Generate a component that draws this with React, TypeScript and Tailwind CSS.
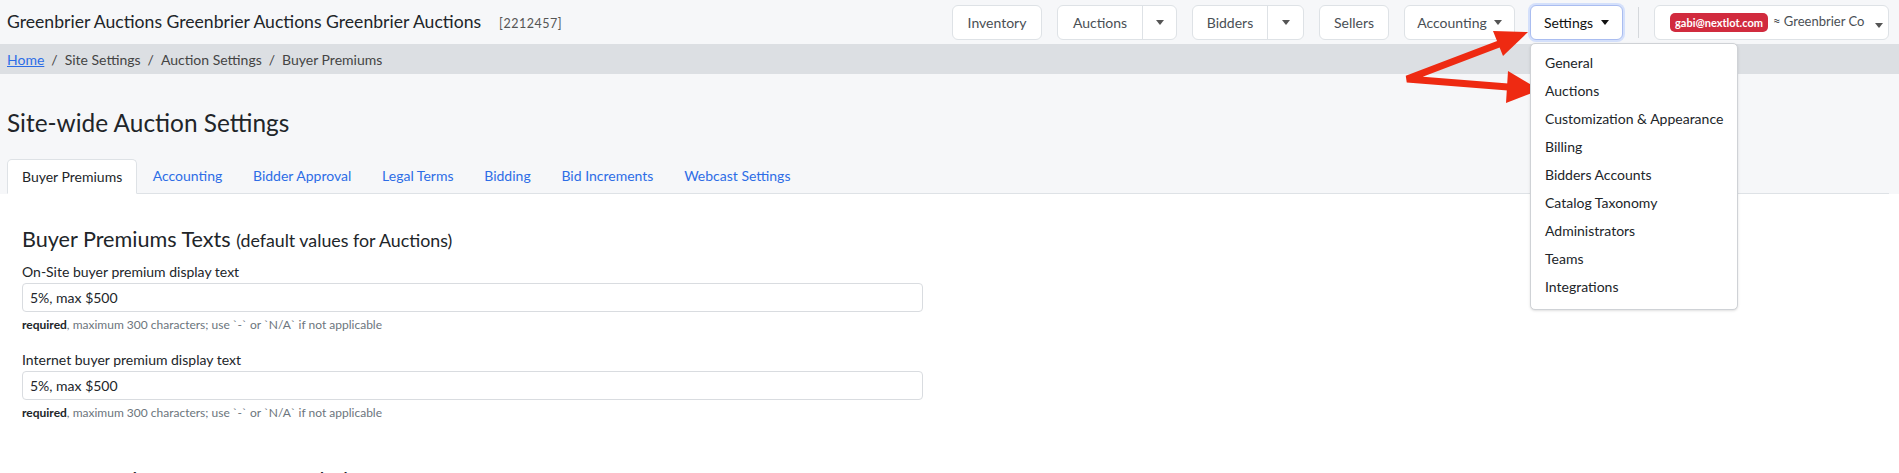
import React from "react";

const Caret = ({ color = "#555" }: { color?: string }) => (
  <span
    className="inline-block w-0 h-0 border-x-[4px] border-x-transparent border-t-[5px]"
    style={{ borderTopColor: color }}
  />
);

const navBtn =
  "h-[35px] flex items-center justify-center whitespace-nowrap bg-white border border-[#dee2e6] rounded-[6px] text-[14px] text-[#4a4f55]";

const tabs = [
  "Accounting",
  "Bidder Approval",
  "Legal Terms",
  "Bidding",
  "Bid Increments",
  "Webcast Settings",
];

const menu = [
  "General",
  "Auctions",
  "Customization & Appearance",
  "Billing",
  "Bidders Accounts",
  "Catalog Taxonomy",
  "Administrators",
  "Teams",
  "Integrations",
];

function Field({ label }: { label: string }) {
  return (
    <div className="mb-[19px]">
      <div className="text-[14px] text-[#212529] leading-[18px] mb-[2px]">{label}</div>
      <div className="w-[901px] h-[29px] border border-[#d9dce0] rounded-[4px] bg-white flex items-center px-[7px] text-[14px] text-[#212529]">
        5%, max $500
      </div>
      <div className="mt-[6px] text-[12px] text-[#6c757d] leading-[14px]">
        <span className="font-bold text-[#212529]">required</span>, maximum 300 characters; use `-` or `N/A` if not applicable
      </div>
    </div>
  );
}

export default function App() {
  return (
    <div className="relative h-[473px] bg-white font-['Lato','Noto_Sans',sans-serif] text-[#212529] overflow-hidden">
      {/* top bar */}
      <div className="h-[44px] bg-[#f6f7f9] flex items-center pl-[7px] pr-[10px]">
        <div className="flex items-baseline whitespace-nowrap">
          <span className="text-[17.6px] text-[#212529]">
            Greenbrier Auctions Greenbrier Auctions Greenbrier Auctions
          </span>
          <span className="ml-[18px] text-[12.5px] text-[#555] tracking-[0.5px]">[2212457]</span>
        </div>
        <div className="ml-auto flex items-center gap-[15px]">
          <button className={`${navBtn} w-[90px]`}>Inventory</button>
          <div className={`${navBtn} w-[120px]`}>
            <span className="flex-1 text-center">Auctions</span>
            <span className="h-full border-l border-[#dee2e6] w-[34px] flex items-center justify-center">
              <Caret />
            </span>
          </div>
          <div className={`${navBtn} w-[112px]`}>
            <span className="flex-1 text-center">Bidders</span>
            <span className="h-full border-l border-[#dee2e6] w-[36px] flex items-center justify-center">
              <Caret />
            </span>
          </div>
          <button className={`${navBtn} w-[70px]`}>Sellers</button>
          <button className={`${navBtn} w-[111px] gap-[7px]`}>
            Accounting <Caret />
          </button>
          <div className="relative">
            <button className="h-[35px] w-[93px] flex items-center justify-center gap-[8px] bg-white border border-[#aabdf0] ring-2 ring-[#d4e0fb] rounded-[6px] text-[14px] text-[#111]">
              Settings <Caret color="#111" />
            </button>
            <div className="absolute z-10 left-0 top-[38px] w-[208px] bg-white border border-[#cfd2d6] rounded-[5px] shadow-sm pt-[5px] pb-[8px]">
              {menu.map((m) => (
                <div
                  key={m}
                  className="h-[28px] flex items-center whitespace-nowrap px-[14px] text-[14px] text-[#212529]"
                >
                  {m}
                </div>
              ))}
            </div>
          </div>
          <div className="w-px h-[31px] bg-[#d5d8dc]" />
          <div className={`${navBtn} w-[235px] !justify-start pl-[15px] gap-[5px]`}>
            <span className="bg-[#d12b3e] text-white text-[11px] font-bold rounded-[5px] px-[5px] py-[2px] leading-[15px]">
              gabi@nextlot.com
            </span>
            <span className="text-[13px] text-[#4a4f55]">≈ Greenbrier Co</span>
            <span className="ml-[6px]">
              <Caret />
            </span>
          </div>
        </div>
      </div>

      {/* breadcrumb */}
      <div className="h-[30px] bg-[#dcdfe3] flex items-center px-[7px] text-[14px] text-[#444]">
        <a className="text-[#2d6de6] underline">Home</a>
        <span className="mx-[7px]">/</span>
        <span>Site Settings</span>
        <span className="mx-[7px]">/</span>
        <span>Auction Settings</span>
        <span className="mx-[7px]">/</span>
        <span>Buyer Premiums</span>
      </div>

      {/* page title + tabs */}
      <div className="bg-[#f6f7f9] pl-[7px] pr-[10px] pt-[34px]">
        <h1 className="text-[24.4px] leading-[30px] text-[#212529] font-normal">Site-wide Auction Settings</h1>
        <div className="mt-[21px] flex items-end border-b border-[#dee2e6] h-[35px]">
          <div className="h-[35px] -mb-px bg-white border border-[#dee2e6] border-b-white rounded-t-[5px] px-[14px] flex items-center text-[14px] text-[#212529]">
            Buyer Premiums
          </div>
          {tabs.map((t) => (
            <div key={t} className="h-[35px] px-[15.4px] flex items-center text-[14px] text-[#2d6de6]">
              {t}
            </div>
          ))}
        </div>
      </div>

      {/* content */}
      <div className="px-[22px] pt-[32px]">
        <h2 className="text-[21.6px] leading-[26px] text-[#212529] mb-[10px]">
          Buyer Premiums Texts <span className="text-[17.8px]">(default values for Auctions)</span>
        </h2>
        <Field label="On-Site buyer premium display text" />
        <Field label="Internet buyer premium display text" />
        <h2 className="mt-[47px] text-[21.6px] leading-[26px] text-[#212529]">
          Buyer Premiums Per Custom Label
        </h2>
      </div>

      {/* annotation arrows */}
      <svg className="absolute left-0 top-0 pointer-events-none" width="1899" height="473">
        <polyline
          points="1499,44 1407,79 1508,87"
          fill="none"
          stroke="#ee2a12"
          strokeWidth="7"
          strokeLinejoin="miter"
        />
        <polygon points="1528,32 1503,56 1493,31" fill="#ee2a12" />
        <polygon points="1540,90 1506,103 1508,71" fill="#ee2a12" />
      </svg>
    </div>
  );
}
